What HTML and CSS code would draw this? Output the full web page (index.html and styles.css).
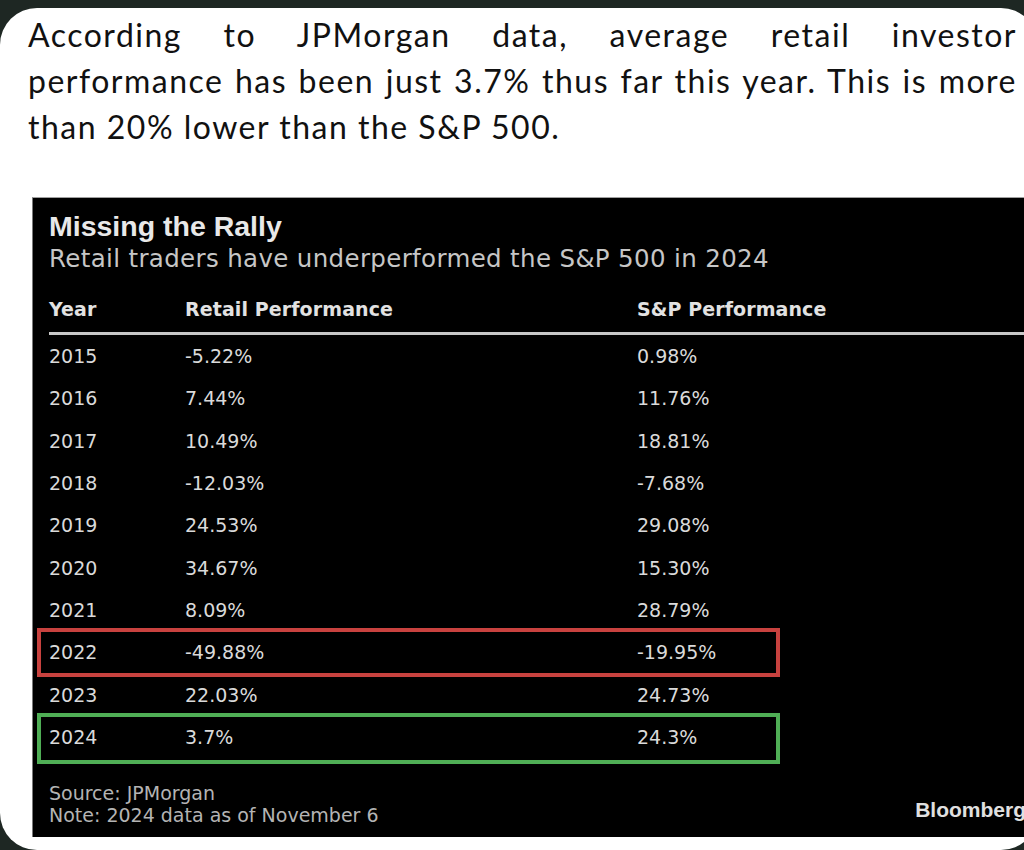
FILE: index.html
```html
<!DOCTYPE html>
<html lang="en">
<head>
<meta charset="utf-8">
<title>Missing the Rally</title>
<link rel="stylesheet" href="styles.css">
</head>
<body>
<div class="card">
  <p class="lead">According to JPMorgan data, average retail investor performance has been just 3.7% thus far this year. This is more than 20% lower than the S&amp;P 500.</p>
  <section class="chart">
    <h1 class="chart-title">Missing the Rally</h1>
    <p class="chart-sub">Retail traders have underperformed the S&amp;P 500 in 2024</p>
    <div class="thead">
      <span>Year</span><span>Retail Performance</span><span>S&amp;P Performance</span>
    </div>
    <div class="rows">
      <div class="row"><span>2015</span><span>-5.22%</span><span>0.98%</span></div>
      <div class="row"><span>2016</span><span>7.44%</span><span>11.76%</span></div>
      <div class="row"><span>2017</span><span>10.49%</span><span>18.81%</span></div>
      <div class="row"><span>2018</span><span>-12.03%</span><span>-7.68%</span></div>
      <div class="row"><span>2019</span><span>24.53%</span><span>29.08%</span></div>
      <div class="row"><span>2020</span><span>34.67%</span><span>15.30%</span></div>
      <div class="row"><span>2021</span><span>8.09%</span><span>28.79%</span></div>
      <div class="row hl hl-red"><span>2022</span><span>-49.88%</span><span>-19.95%</span></div>
      <div class="row"><span>2023</span><span>22.03%</span><span>24.73%</span></div>
      <div class="row hl hl-green"><span>2024</span><span>3.7%</span><span>24.3%</span></div>
    </div>
    <div class="foot">
      <div class="notes">
        <div>Source: JPMorgan</div>
        <div>Note: 2024 data as of November 6</div>
      </div>
      <div class="brand">Bloomberg</div>
    </div>
  </section>
</div>
</body>
</html>
```

FILE: styles.css
```css
html, body {
  margin: 0;
  height: 100%;
}
body {
  background: #1e2723;
  overflow: hidden;
}
.card {
  background: #ffffff;
  margin-top: 8px;
  width: 1038px;
  height: 842px;
  border-radius: 37px;
  box-sizing: border-box;
  padding: 4px 21px 0 28px;
}
.lead {
  margin: 0;
  font-family: Lato, "Liberation Sans", sans-serif;
  font-size: 32px;
  letter-spacing: 1.5px;
  line-height: 46px;
  color: #111111;
  text-align: justify;
}
.chart {
  margin: 47px -21px 0 4px;
  height: 640px;
  box-sizing: border-box;
  background: #000000;
  border-top: 1px solid #a0a0a0;
  border-left: 1px solid #7a7a7a;
  padding: 11px 0 0 16px;
  font-family: "DejaVu Sans", sans-serif;
}
.chart-title {
  margin: 0;
  font-family: "Liberation Sans", Arial, sans-serif;
  font-weight: 700;
  font-size: 28.5px;
  line-height: 35px;
  color: #e8e8e8;
}
.chart-sub {
  margin: 0;
  font-size: 24.5px;
  letter-spacing: 0.35px;
  line-height: 30px;
  color: #c6c6c6;
}
.thead {
  margin-top: 20px;
  display: grid;
  grid-template-columns: 136px 452px 1fr;
  font-weight: 700;
  font-size: 19px;
  letter-spacing: 0.1px;
  line-height: 30px;
  padding-bottom: 8px;
  border-bottom: 3px solid #c8c8c8;
  color: #e2e2e2;
}
.rows {
  margin-left: -16px;
}
.row {
  position: relative;
  display: grid;
  grid-template-columns: 136px 452px 1fr;
  padding-left: 16px;
  height: 42.33px;
  line-height: 42.33px;
  font-size: 19px;
  color: #dadada;
}
.row.hl::after {
  content: "";
  position: absolute;
  left: 4px;
  width: 743px;
  box-sizing: border-box;
  border-width: 4px;
  border-style: solid;
}
.row.hl-red::after {
  top: -3px;
  bottom: -3px;
  border-color: #c8423f;
}
.row.hl-green::after {
  top: -3px;
  bottom: -6px;
  border-color: #4fae55;
}
.foot {
  margin-top: 24px;
  display: flex;
  justify-content: space-between;
  align-items: flex-end;
  padding-right: 12px;
}
.notes {
  font-size: 19px;
  line-height: 22px;
  color: #b4b4b4;
}
.brand {
  font-family: "Liberation Sans", Arial, sans-serif;
  font-weight: 700;
  font-size: 21px;
  line-height: 22px;
  color: #e0e0e0;
  margin-bottom: 5px;
}
```
